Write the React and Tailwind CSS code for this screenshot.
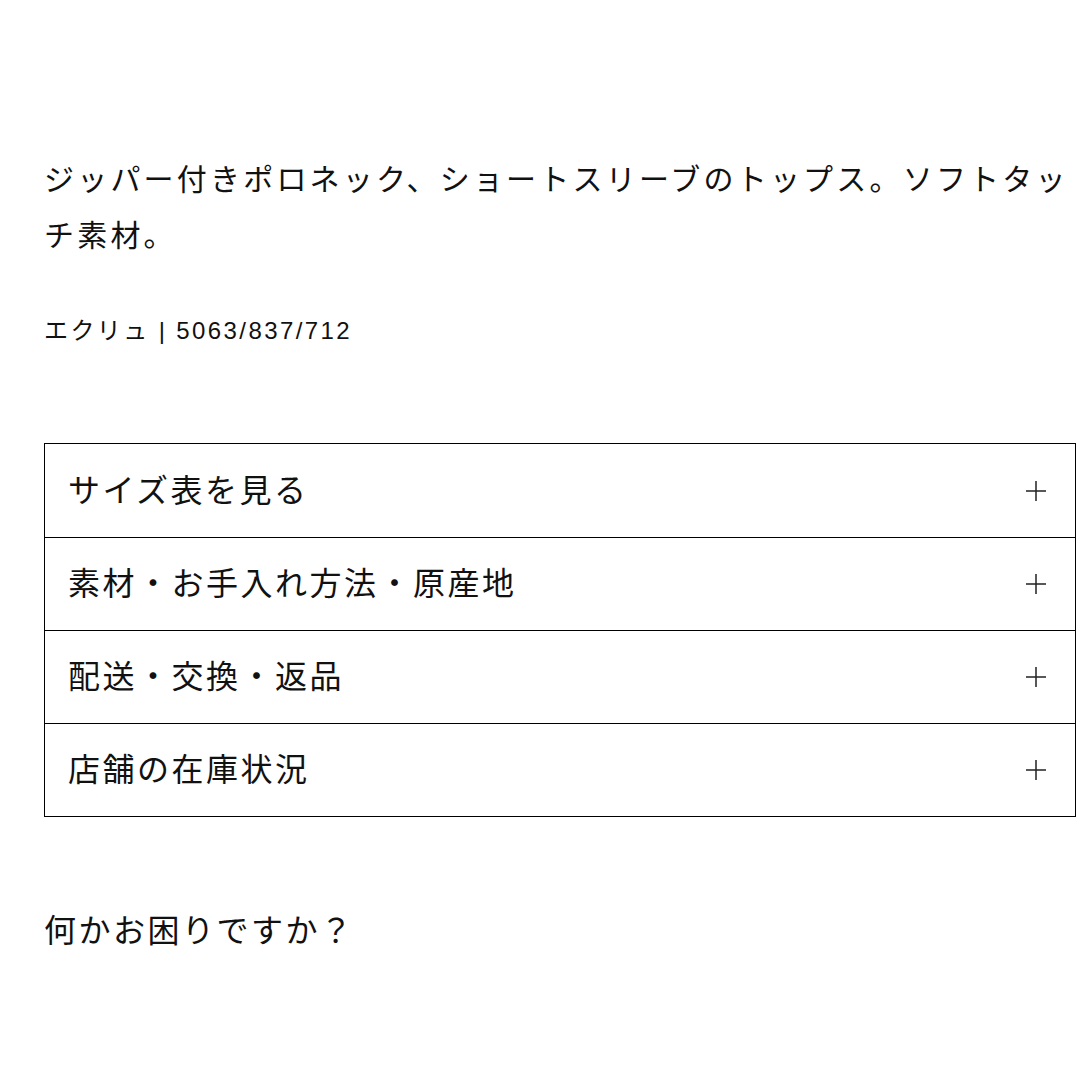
import React from 'react';

const font = { fontFamily: '"Liberation Sans", "Noto Sans CJK JP", sans-serif' };

const sections = ['サイズ表を見る', '素材・お手入れ方法・原産地', '配送・交換・返品', '店舗の在庫状況'];

const PlusIcon = () => (
  <svg width="22" height="22" viewBox="0 0 22 22" fill="none" stroke="#222" strokeWidth="1.5">
    <path d="M11 1v20M1 11h20" />
  </svg>
);

export default function App() {
  return (
    <div className="w-[1080px] h-[1080px] bg-white text-[#111] pl-[44px] pr-[4px] pt-[152px]" style={font}>
      <p className="text-[30px] leading-[56px] tracking-[3.2px]">
        ジッパー付きポロネック、ショートスリーブのトップス。ソフトタッチ素材。
      </p>
      <p className="mt-[51px] text-[24px] leading-[32px] tracking-[2.4px]">エクリュ | 5063/837/712</p>

      <div className="mt-[96px] border border-black">
        {sections.map((s, i) => (
          <div
            key={s}
            className={`flex items-center justify-between h-[93px] pl-[23px] pr-[28px] ${i > 0 ? 'border-t border-black' : ''}`}
          >
            <span className="text-[32px] leading-[48px] tracking-[2.5px]">{s}</span>
            <PlusIcon />
          </div>
        ))}
      </div>

      <p className="mt-[90px] text-[32px] leading-[48px] tracking-[2.5px]">何かお困りですか？</p>
    </div>
  );
}
